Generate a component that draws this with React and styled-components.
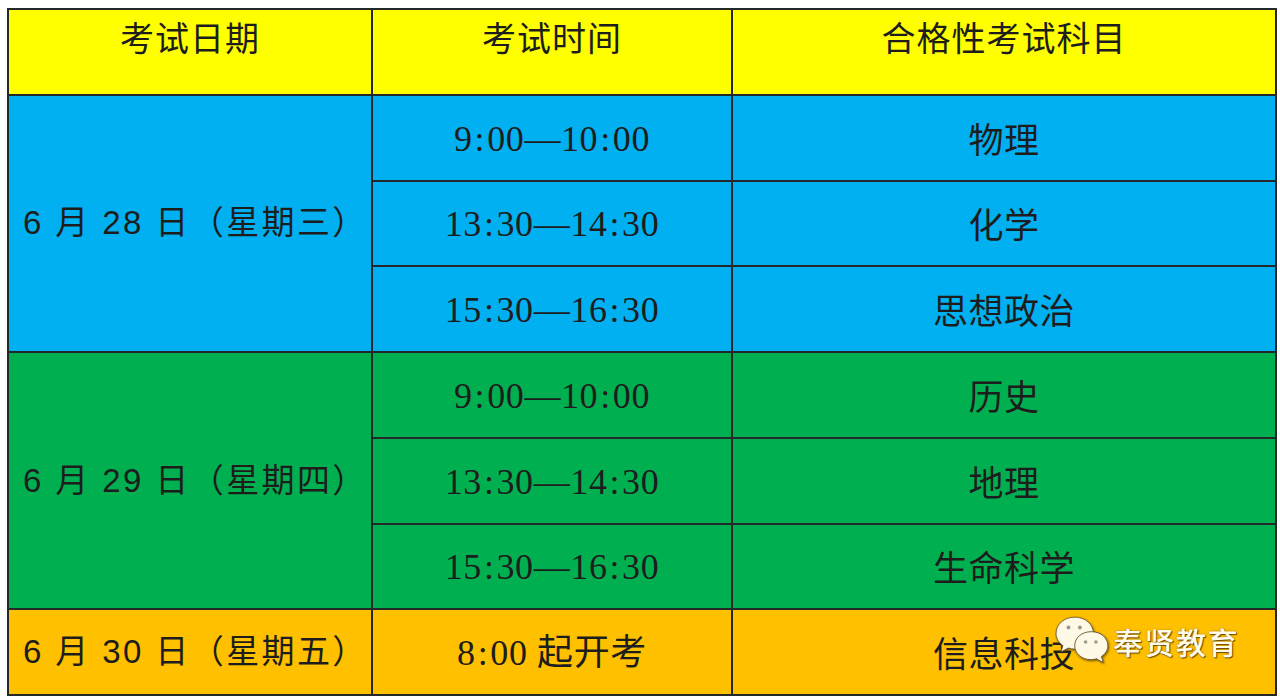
import React from "react";
import styled, { createGlobalStyle } from "styled-components";

const Global = createGlobalStyle`
  html, body { margin: 0; padding: 0; background: #ffffff; }
  body { width: 1280px; height: 699px; overflow: hidden; }
`;

const Page = styled.div`
  padding: 8px 0 0 7px;
`;

const Grid = styled.div`
  position: relative;
  width: 1270px;
  height: 688px;
  box-sizing: border-box;
  display: grid;
  grid-template-columns: 362px 358px 542px;
  grid-template-rows: repeat(8, 1fr);
  gap: 2px;
  padding: 2px;
  background: #23282a;
`;

const COLORS = {
  header: "#ffff00",
  blue: "#00b0f0",
  green: "#00b050",
  orange: "#ffc000",
};

const Cell = styled.div`
  background: ${(p) => COLORS[p.$tone]};
  grid-row: ${(p) => (p.$span ? `span ${p.$span}` : "auto")};
  display: flex;
  align-items: ${(p) => (p.$head ? "flex-start" : "center")};
  justify-content: ${(p) => (p.$left ? "flex-start" : "center")};
  padding: ${(p) => (p.$head ? "6px 0 0" : p.$left ? "0 0 0 14px" : "0")};
  box-sizing: border-box;
  color: #1d1d1d;
  font-size: 34px;
  line-height: 42px;
  white-space: nowrap;
  position: relative;
`;

const HeadText = styled.span`
  font-family: "Noto Sans CJK SC", sans-serif;
  font-weight: 400;
  letter-spacing: 1px;
`;

const DateText = styled.span`
  font-family: "Liberation Sans", "Noto Sans CJK SC", sans-serif;
  font-size: 33px;
  letter-spacing: 2.4px;
`;

const TimeText = styled.span`
  font-family: "Liberation Serif", "Noto Sans CJK SC", serif;
  font-size: 36px;
  letter-spacing: 0.6px;
  padding-top: 2px;
`;

const Colon = styled.span`
  margin: 0 2px;
`;

const SubjectText = styled.span`
  font-family: "Noto Sans CJK SC", sans-serif;
  font-size: 35px;
  letter-spacing: 0.5px;
`;

const Watermark = styled.div`
  position: absolute;
  right: 38px;
  bottom: 28px;
  display: flex;
  align-items: center;
  gap: 1px;
`;

const MarkText = styled.span`
  font-family: "Noto Sans CJK SC", sans-serif;
  font-size: 30px;
  font-weight: 500;
  color: #fffbe8;
  letter-spacing: 1.5px;
  text-shadow: 1px 1px 1px rgba(60, 40, 0, 0.75), 0 0 2px rgba(80, 50, 0, 0.5);
  line-height: 36px;
`;

const WeChatIcon = () => (
  <svg width="58" height="54" viewBox="0 0 56 52">
    <defs>
      <filter id="sh" x="-20%" y="-20%" width="140%" height="140%">
        <feDropShadow dx="0.8" dy="1" stdDeviation="0.8" floodColor="#4a3200" floodOpacity="0.8" />
      </filter>
    </defs>
    <g filter="url(#sh)">
      <path
        d="M20 3 C9.5 3 2 10 2 18.5 C2 23.5 4.6 27.6 8.6 30.4 L6.8 36.5 L13.8 32.8 C15.8 33.4 17.8 33.8 20 33.8 C30.5 33.8 38 26.8 38 18.4 C38 10 30.5 3 20 3 Z"
        fill="#fdf9e6"
        stroke="#6b5a2e"
        strokeWidth="0.8"
      />
      <path
        d="M36 17 C26.6 17 20 23 20 30.5 C20 38 26.6 44 36 44 C37.8 44 39.5 43.7 41 43.2 L47.5 46.8 L45.8 41 C49.6 38.5 52 34.7 52 30.5 C52 23 45.4 17 36 17 Z"
        fill="#fdf9e6"
        stroke="#6b5a2e"
        strokeWidth="0.9"
      />
    </g>
    <circle cx="14" cy="13" r="1.9" fill="#9a9a8e" />
    <circle cx="25" cy="13" r="1.9" fill="#9a9a8e" />
    <circle cx="30.5" cy="27" r="1.7" fill="#9a9a8e" />
    <circle cx="40.5" cy="27" r="1.7" fill="#9a9a8e" />
  </svg>
);

const Time = ({ value }) => {
  const parts = value.split(":");
  return (
    <TimeText>
      {parts.map((p, i) => (
        <React.Fragment key={i}>
          {i > 0 && <Colon>:</Colon>}
          {p}
        </React.Fragment>
      ))}
    </TimeText>
  );
};

const groups = [
  {
    tone: "blue",
    date: "6 月 28 日（星期三）",
    rows: [
      ["9:00—10:00", "物理"],
      ["13:30—14:30", "化学"],
      ["15:30—16:30", "思想政治"],
    ],
  },
  {
    tone: "green",
    date: "6 月 29 日（星期四）",
    rows: [
      ["9:00—10:00", "历史"],
      ["13:30—14:30", "地理"],
      ["15:30—16:30", "生命科学"],
    ],
  },
  {
    tone: "orange",
    date: "6 月 30 日（星期五）",
    rows: [["8:00 起开考", "信息科技"]],
  },
];

export default function App() {
  return (
    <Page>
      <Global />
      <Grid>
        <Cell $tone="header" $head>
          <HeadText>考试日期</HeadText>
        </Cell>
        <Cell $tone="header" $head>
          <HeadText>考试时间</HeadText>
        </Cell>
        <Cell $tone="header" $head>
          <HeadText>合格性考试科目</HeadText>
        </Cell>
        {groups.map((g) => (
          <React.Fragment key={g.date}>
            <Cell $tone={g.tone} $span={g.rows.length} $left>
              <DateText>{g.date}</DateText>
            </Cell>
            {g.rows.map(([t, s]) => (
              <React.Fragment key={s}>
                <Cell $tone={g.tone} style={{ gridColumn: 2 }}>
                  <Time value={t} />
                </Cell>
                <Cell $tone={g.tone} style={{ gridColumn: 3 }}>
                  <SubjectText>{s}</SubjectText>
                </Cell>
              </React.Fragment>
            ))}
          </React.Fragment>
        ))}
        <Watermark>
          <WeChatIcon />
          <MarkText>奉贤教育</MarkText>
        </Watermark>
      </Grid>
    </Page>
  );
}
